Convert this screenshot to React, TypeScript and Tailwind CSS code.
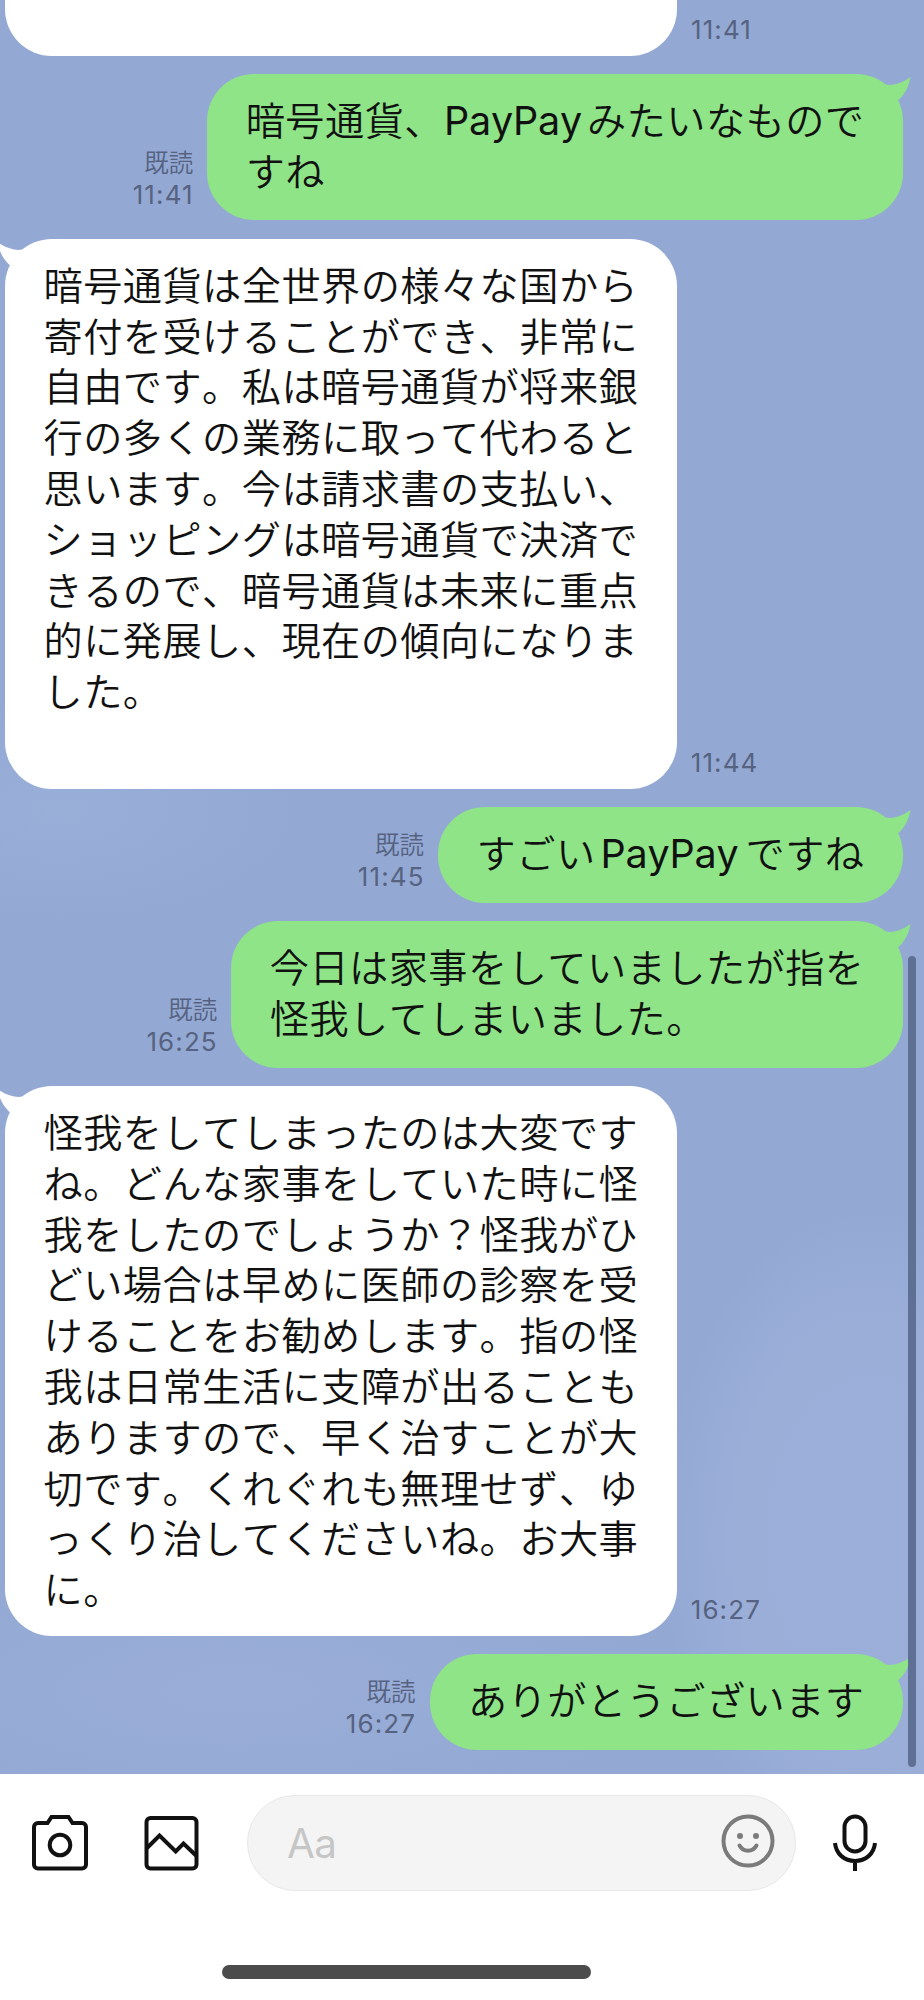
import type { ReactNode } from "react";

interface Message {
  id: number;
  mine: boolean;
  time: string;
  body: ReactNode;
}

const messages: Message[] = [
  {
    id: 1,
    mine: true,
    time: "11:41",
    body: (
      <>
        暗号通貨、<Latin className="w-[143px]">PayPay</Latin>みたいなもので{"\n"}すね
      </>
    ),
  },
  {
    id: 2,
    mine: false,
    time: "11:44",
    body: `暗号通貨は全世界の様々な国から
寄付を受けることができ、非常に
自由です。私は暗号通貨が将来銀
行の多くの業務に取って代わると
思います。今は請求書の支払い、
ショッピングは暗号通貨で決済で
きるので、暗号通貨は未来に重点
的に発展し、現在の傾向になりま
した。
\u00a0`,
  },
  {
    id: 3,
    mine: true,
    time: "11:45",
    body: (
      <>
        すごい<Latin className="w-[150px] pl-[5px]">PayPay</Latin>ですね
      </>
    ),
  },
  {
    id: 4,
    mine: true,
    time: "16:25",
    body: "今日は家事をしていましたが指を\n怪我してしまいました。",
  },
  {
    id: 5,
    mine: false,
    time: "16:27",
    body: `怪我をしてしまったのは大変です
ね。どんな家事をしていた時に怪
我をしたのでしょうか？怪我がひ
どい場合は早めに医師の診察を受
けることをお勧めします。指の怪
我は日常生活に支障が出ることも
ありますので、早く治すことが大
切です。くれぐれも無理せず、ゆ
っくり治してくださいね。お大事
に。`,
  },
  { id: 6, mine: true, time: "16:27", body: "ありがとうございます" },
];

function Latin({ className, children }: { className: string; children: string }) {
  return (
    <span
      className={`inline-block font-['Inter',sans-serif] text-[39.5px] leading-none font-normal tracking-[-0.2px] ${className}`}
    >
      {children}
    </span>
  );
}

function Stamp({ mine, time }: { mine: boolean; time: string }) {
  return (
    <div
      className={`flex flex-col pb-[10px] text-[#566280] ${mine ? "items-end" : "items-start"}`}
    >
      {mine && (
        <span className="-mt-4 font-['Noto_Sans_CJK_JP',sans-serif] text-[24.5px] leading-[35px] font-[350]">
          既読
        </span>
      )}
      <span className="-mr-[0.5px] font-['Inter',sans-serif] text-[26px] leading-[31.5px] tracking-[1.1px]">
        {time}
      </span>
    </div>
  );
}

function Tail({ mine }: { mine: boolean }) {
  return (
    <svg
      viewBox="0 0 34 40"
      className={`absolute top-0 h-10 w-[34px] ${
        mine ? "-right-2 text-[#8ee487]" : "-left-2 -scale-x-100 text-white"
      }`}
      fill="currentColor"
    >
      <path d="M4 20 L8.500 10.500 C15 12 25 9.500 33.500 3 C32 12 28 20 21.500 26 L12 32 Z" />
    </svg>
  );
}

function MessageRow({ mine, time, body }: Message) {
  return (
    <div
      className={`flex items-end gap-[14px] ${
        mine ? "flex-row-reverse pr-[21px]" : "pl-[5px]"
      }`}
    >
      <div
        className={`relative rounded-[47px] px-[38.5px] pt-[19px] text-[#111] ${
          mine ? "bg-[#8ee487] pb-[25.7px]" : "bg-white pb-[23px]"
        }`}
      >
        <Tail mine={mine} />
        <p className="relative font-['Noto_Sans_CJK_JP',sans-serif] text-[39.2px] leading-[50.8px] font-[350] tracking-[0.46px] whitespace-pre [font-kerning:none]">
          {body}
        </p>
      </div>
      <Stamp mine={mine} time={time} />
    </div>
  );
}

function CameraIcon() {
  return (
    <svg viewBox="0 0 56 56" className="h-14 w-14" fill="none" stroke="#111" strokeWidth="4">
      <path d="M6 8h9.500l4-6h17l4 6H50a4 4 0 0 1 4 4v37.500a4 4 0 0 1-4 4H6a4 4 0 0 1-4-4V12a4 4 0 0 1 4-4Z" />
      <circle cx="28" cy="30" r="10.300" />
    </svg>
  );
}

function PhotoIcon() {
  return (
    <svg viewBox="0 0 56 56" className="h-14 w-14" fill="none" stroke="#111" strokeWidth="4">
      <rect x="2.500" y="3" width="50" height="50.500" rx="4" />
      <path d="M3 33 15.500 20.500 31.700 36.500 39.500 28.500 52 40.500" />
    </svg>
  );
}

function SmileIcon() {
  return (
    <svg viewBox="0 0 54 54" className="h-[54px] w-[54px]" fill="none" stroke="#7b7b7b" strokeWidth="4">
      <circle cx="27" cy="27" r="24.500" />
      <circle cx="19" cy="22" r="3" fill="#7b7b7b" stroke="none" />
      <circle cx="35" cy="22" r="3" fill="#7b7b7b" stroke="none" />
      <path d="M18.500 31.500c4 7 13 7 17 0" strokeLinecap="round" />
    </svg>
  );
}

function MicIcon() {
  return (
    <svg viewBox="0 0 44 58" className="h-[58px] w-11" fill="none" stroke="#111" strokeWidth="4">
      <rect x="11.500" y="2.500" width="21" height="35" rx="10.500" />
      <path d="M2 29c1 11 9.500 18 20 18s19-7 20-18M22 47v10" />
    </svg>
  );
}

export default function App() {
  return (
    <div className="relative flex h-[2000px] w-[924px] flex-col overflow-hidden bg-white">
      <main className="flex h-[1774px] flex-col gap-[18.5px] overflow-hidden bg-[#93a9d4] bg-[radial-gradient(ellipse_240px_110px_at_60px_810px,#99afd8_0%,transparent_100%),radial-gradient(ellipse_210px_330px_at_870px_1540px,#9bafda_0%,#9aaed8_65%,transparent_100%),radial-gradient(ellipse_420px_130px_at_240px_1690px,#99add8_0%,transparent_100%)]">
        <div className="flex h-[55.5px] shrink-0 items-end gap-[14px] pl-[5px]">
          <div className="h-[55.5px] w-[672px] rounded-b-[47px] bg-white" />
          <Stamp mine={false} time="11:41" />
        </div>
        {messages.map((message) => (
          <MessageRow key={message.id} {...message} />
        ))}
      </main>

      <footer className="flex flex-1 flex-col bg-white">
        <div className="flex h-[138px] items-center pl-8">
          <CameraIcon />
          <div className="ml-14">
            <PhotoIcon />
          </div>
          <div className="ml-[47px] flex h-24 w-[549px] items-center justify-between rounded-full border-[1.5px] border-[#e7e7e7] bg-[#f4f4f4] pr-[20px] pl-[39px]">
            <span className="pt-0.5 font-['Inter',sans-serif] text-[40.5px] tracking-[-0.8px] text-[#c6c6c6]">Aa</span>
            <div className="-mt-1">
              <SmileIcon />
            </div>
          </div>
          <div className="ml-[37px]">
            <MicIcon />
          </div>
        </div>
        <div className="mt-[53px] ml-[222px] h-[14px] w-[369px] rounded-full bg-[#4c4c4c]" />
      </footer>

      <div className="absolute top-[956px] left-[908px] h-[811px] w-2 rounded-full bg-[#5f7095]" />
    </div>
  );
}
